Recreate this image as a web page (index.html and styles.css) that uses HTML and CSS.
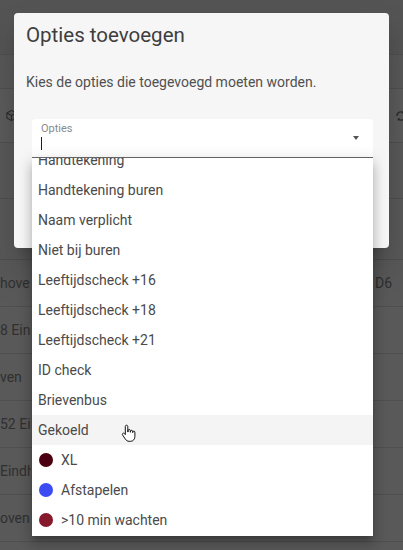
FILE: index.html
```html
<!DOCTYPE html>
<html lang="nl">
<head>
<meta charset="utf-8">
<title>Opties toevoegen</title>
<link rel="stylesheet" href="styles.css">
</head>
<body>
<div class="page">
  <div class="row row-header"></div>
  <div class="row row-sub"></div>
  <div class="row row-tools">
    <svg class="ico-cube" width="13" height="13" viewBox="0 0 24 24"><path d="M12 2.5l8.5 4.75v9.5L12 21.5l-8.5-4.75v-9.5z M3.5 7.25L12 12l8.5-4.75 M12 12v9.5" fill="none" stroke="#2c2c2c" stroke-width="2" stroke-linejoin="round"/></svg>
    <svg class="ico-refresh" width="14" height="14" viewBox="0 0 24 24"><path d="M5 12a7 7 0 0 1 12-4.9 M19 12a7 7 0 0 1-12 4.9" fill="none" stroke="#2c2c2c" stroke-width="2.4"/><path d="M17.5 3.5v4.2h-4.2z M6.5 20.5v-4.2h4.2z" fill="#2c2c2c"/></svg>
  </div>
  <div class="row row-a"></div>
  <div class="row row-b"></div>
  <div class="row row-data"><span class="cell">hove</span><span class="cell-end">D6</span></div>
  <div class="row row-data"><span class="cell">8 Ein</span></div>
  <div class="row row-data"><span class="cell">ven</span></div>
  <div class="row row-data"><span class="cell">52 Ei</span></div>
  <div class="row row-data"><span class="cell">Eindh</span></div>
  <div class="row row-data"><span class="cell">oven</span></div>
</div>

<div class="dialog">
  <h1 class="dialog-title">Opties toevoegen</h1>
  <p class="dialog-text">Kies de opties die toegevoegd moeten worden.</p>
  <div class="field">
    <span class="field-label">Opties</span>
    <span class="field-caret"></span>
    <span class="field-arrow"></span>
    <div class="menu">
      <ul class="menu-list">
        <li class="menu-item">Handtekening</li>
        <li class="menu-item">Handtekening buren</li>
        <li class="menu-item">Naam verplicht</li>
        <li class="menu-item">Niet bij buren</li>
        <li class="menu-item">Leeftijdscheck +16</li>
        <li class="menu-item">Leeftijdscheck +18</li>
        <li class="menu-item">Leeftijdscheck +21</li>
        <li class="menu-item">ID check</li>
        <li class="menu-item">Brievenbus</li>
        <li class="menu-item is-hover">Gekoeld</li>
        <li class="menu-item"><span class="dot dot-xl"></span>XL</li>
        <li class="menu-item"><span class="dot dot-blue"></span>Afstapelen</li>
        <li class="menu-item"><span class="dot dot-red"></span>&gt;10 min wachten</li>
      </ul>
    </div>
  </div>
</div>

<svg class="cursor" width="15" height="18" viewBox="0 0 15 18"><path d="M5.5 1.2c.8 0 1.3.6 1.3 1.3V8h.3V6.6c0-.7.5-1.1 1.1-1.1s1.1.4 1.1 1.1V8.2h.3V7.3c0-.6.5-1 1-1s1 .4 1 1v1.2h.3V8c0-.6.5-.9 1-.9s1 .4 1 1v4.4c0 2.600-1.700 4.800-4.300 4.800H8.1c-1.600 0-2.700-.8-3.600-2L1.6 11c-.4-.6-.3-1.300.3-1.700.6-.4 1.300-.2 1.700.3l.7 1V2.5c0-.7.5-1.300 1.200-1.300z" fill="#fff" stroke="#111" stroke-width="1"/></svg>
</body>
</html>
```

FILE: styles.css
```css
* { box-sizing: border-box; }
html, body { margin: 0; padding: 0; }
body {
  width: 403px;
  height: 550px;
  overflow: hidden;
  background: #595959;
  font-family: Roboto, "Liberation Sans", sans-serif;
  position: relative;
}

/* dimmed page behind the dialog */
.page { display: flex; flex-direction: column; }
.row {
  border-bottom: 1px solid #4f4f4f;
  display: flex;
  align-items: center;
  justify-content: space-between;
}
.row-header { height: 55px; background: #545454; }
.row-sub { height: 34px; background: #585858; }
.row-tools { height: 54px; background: #5b5b5b; padding: 0 0 0 5px; }
.row-a { height: 56px; }
.row-b { height: 61px; }
.row-data { height: 47px; font-size: 14px; color: #303030; }
.cell { display: block; width: 31px; overflow: hidden; white-space: nowrap; }
.cell-end { padding-right: 11px; }
.ico-refresh { margin-right: -5px; }

/* dialog */
.dialog {
  position: absolute;
  left: 14px;
  top: 13px;
  width: 375px;
  height: 235px;
  background: #f6f6f6;
  border-radius: 4px;
  padding: 10px 16px 0 12px;
  box-shadow: 0 11px 15px -7px rgba(0,0,0,.2), 0 24px 38px 3px rgba(0,0,0,.14);
}
.dialog-title {
  margin: 0;
  font-size: 20.5px;
  line-height: 24px;
  font-weight: 400;
  color: #3e3e3e;
}
.dialog-text {
  margin: 25px 0 0;
  font-size: 14px;
  line-height: 20px;
  color: #505050;
}

.field {
  position: relative;
  margin: 27px 0 0 6px;
  width: 341px;
  height: 39px;
  background: #fff;
  border-radius: 4px 4px 0 0;
  border-bottom: 1px solid #6a6a6a;
}
.field-label {
  position: absolute;
  left: 9px;
  top: 3px;
  font-size: 11px;
  color: #8a8a8a;
}
.field-caret {
  position: absolute;
  left: 9px;
  top: 18px;
  width: 1px;
  height: 13px;
  background: #222;
}
.field-arrow {
  position: absolute;
  right: 14px;
  top: 17px;
  border-left: 3.5px solid transparent;
  border-right: 3.5px solid transparent;
  border-top: 4px solid #555;
}

.menu {
  position: absolute;
  left: 0;
  top: 39px;
  width: 341px;
  height: 378px;
  background: #fff;
  overflow: hidden;
  box-shadow: 0 5px 5px -3px rgba(0,0,0,.2), 0 8px 10px 1px rgba(0,0,0,.14), 0 3px 14px 2px rgba(0,0,0,.12);
}
.menu-list {
  list-style: none;
  margin: -13px 0 0;
  padding: 0;
}
.menu-item {
  height: 30px;
  display: flex;
  align-items: center;
  padding-left: 6px;
  font-size: 14px;
  color: #4a4a4a;
}
.menu-item.is-hover { background: #f4f4f4; }
.dot {
  width: 14px;
  height: 14px;
  border-radius: 50%;
  margin: 0 8px 0 1px;
}
.dot-xl { background: #4a0010; }
.dot-blue { background: #3c4cf2; }
.dot-red { background: #861a2c; }

.cursor {
  position: absolute;
  left: 121px;
  top: 424px;
}
```
